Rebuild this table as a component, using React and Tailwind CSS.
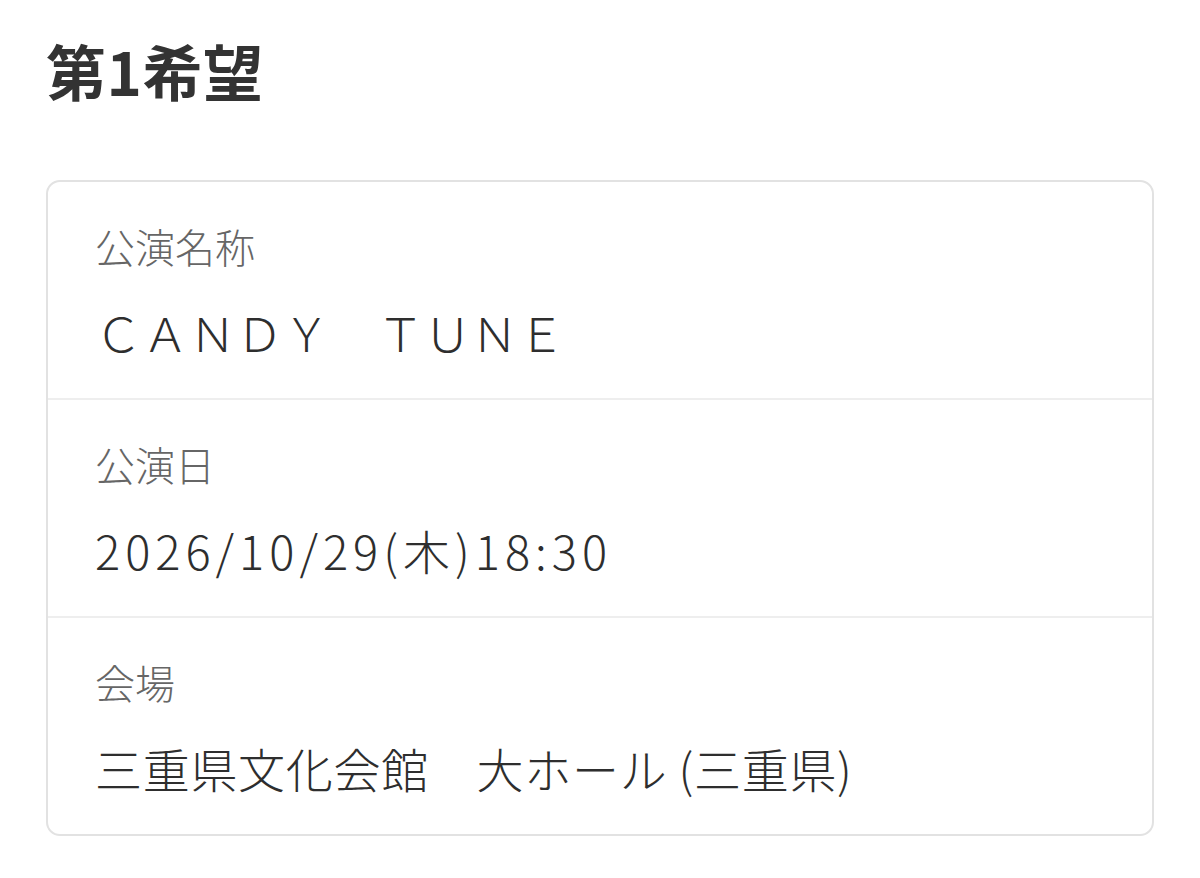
import React from "react";

const rows = [
    { label: "公演名称", value: "ＣＡＮＤＹ　ＴＵＮＥ", tracking: "" },
    { label: "公演日", value: "2026/10/29(木)18:30", tracking: "tracking-[5px]" },
    { label: "会場", value: "三重県文化会館　大ホール (三重県)", tracking: "tracking-[0.7px]" },
];

export default function App() {
    return (
        <div
            className="min-h-[878px] w-[1200px] bg-white text-[#333333]"
            style={{ fontFamily: '"Noto Sans CJK JP", "Noto Sans", sans-serif' }}
        >
            <div className="px-[46px] pt-[34px]">
                <h1 className="text-[60px] font-bold leading-[72px] tracking-[0.5px]">第1希望</h1>

                <div className="mt-[74px] rounded-[14px] border-2 border-[#e2e2e2] bg-white">
                    {rows.map((row, index) => (
                        <div
                            key={row.label}
                            className={
                                index === 0
                                    ? "h-[216px] pl-[47px] pt-[40px]"
                                    : "h-[218px] border-t-2 border-[#eeeeee] pl-[47px] pt-[40px]"
                            }
                        >
                            <p className="text-[40px] font-light leading-[48px] text-[#666666]">{row.label}</p>
                            <p className={`mt-[34px] text-[47px] font-light leading-[56px] text-[#2e2e2e] ${row.tracking}`}>
                                {row.value}
                            </p>
                        </div>
                    ))}
                </div>
            </div>
        </div>
    );
}
